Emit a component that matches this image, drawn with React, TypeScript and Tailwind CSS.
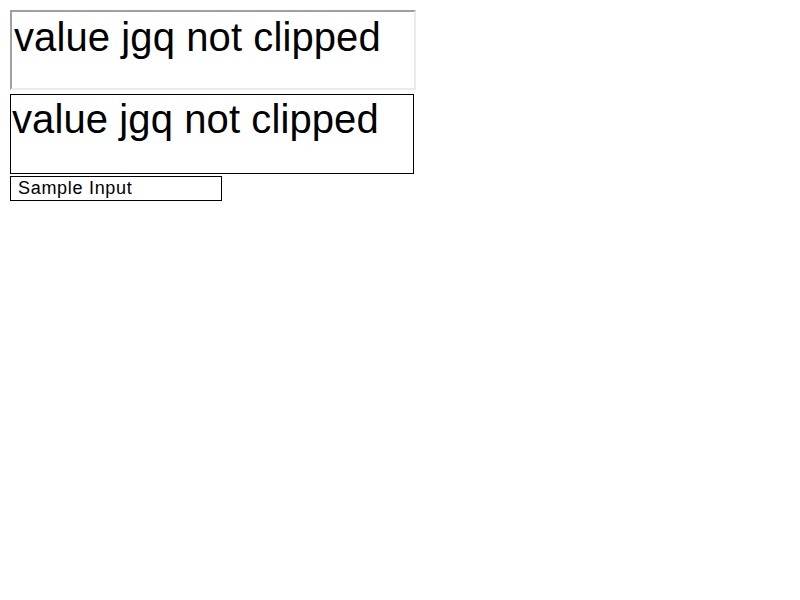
import * as React from "react";

export default function App() {
  return (
    <div className="flex flex-col items-start p-[10px] font-['Liberation_Sans',Arial,sans-serif] text-black bg-white min-h-screen">
      {/* inset field */}
      <div className="w-[406px] h-[80px] border-2 border-t-[#a0a0a0] border-l-[#a0a0a0] border-r-[#ebebeb] border-b-[#ebebeb] p-[2px] text-[40px] leading-[46px] tracking-[0.1px] whitespace-nowrap overflow-hidden">
        value jgq not clipped
      </div>

      {/* plain field */}
      <div className="mt-[4px] w-[404px] h-[80px] border border-black p-[1px] text-[40px] leading-[46px] tracking-[0.1px] whitespace-nowrap overflow-hidden">
        value jgq not clipped
      </div>

      {/* small input */}
      <div className="mt-[2px] w-[212px] h-[25px] border border-black pl-[7px] text-[18px] leading-[23px] tracking-[0.7px] whitespace-nowrap overflow-hidden">
        Sample Input
      </div>
    </div>
  );
}
